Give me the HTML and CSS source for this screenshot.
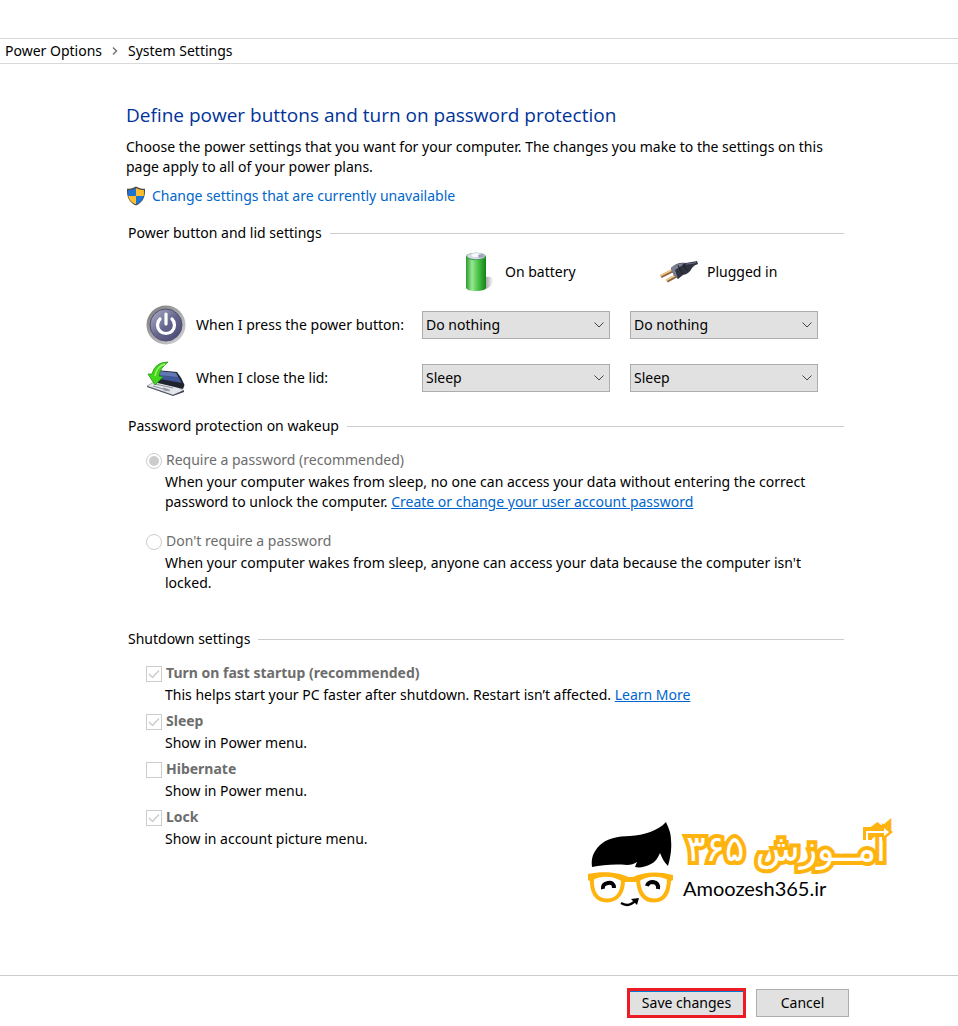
FILE: index.html
```html
<!DOCTYPE html>
<html lang="en">

<head>
    <meta charset="utf-8" />
    <meta name="viewport" content="width=device-width, initial-scale=1.0" />
    <title>System Settings</title>
    <link rel="stylesheet" href="styles.css">
</head>

<body>
    <nav class="breadcrumb" aria-label="Breadcrumb">
        <a href="#">Power Options</a>
        <svg class="breadcrumb-arrow" viewBox="0 0 8 10" aria-hidden="true">
            <path d="M2 1.5 L5.5 5 L2 8.5" />
        </svg>
        <a href="#">System Settings</a>
    </nav>

    <main class="content">
        <h1>Define power buttons and turn on password protection</h1>
        <p class="intro">Choose the power settings that you want for your computer. The changes you make to the settings on this page apply to all of your power plans.</p>
        <a class="admin-link" href="#">
            <svg class="shield" viewBox="0 0 20 20" aria-hidden="true">
                <path d="M10 0.5 C13 2.4 16 2.9 19 2.8 C19.3 10.5 17.5 16.3 10 19.5 C2.5 16.3 0.7 10.5 1 2.8 C4 2.9 7 2.4 10 0.5 Z" fill="#4a4a4a" />
                <path d="M10 2 V10 H2.2 C2 8 2 6 2.2 4 C5 4 7.5 3.5 10 2 Z M10 10 H17.8 C17 14 14.5 16.7 10 18.3 Z" fill="#1e74d2" />
                <path d="M10 2 C12.5 3.5 15 4 17.8 4 C18 6 18 8 17.8 10 H10 Z M2.2 10 H10 V18.3 C5.5 16.7 3 14 2.2 10 Z" fill="#fdbf2d" />
            </svg>
            <span>Change settings that are currently unavailable</span>
        </a>

        <section>
            <h2>Power button and lid settings</h2>
            <div class="power-grid">
                <div class="column-head on-battery">
                    <svg class="icon" viewBox="0 0 40 40" aria-hidden="true">
                        <defs>
                            <linearGradient id="battery-green">
                                <stop offset="0" stop-color="#2a9a2a" />
                                <stop offset="0.3" stop-color="#98e894" />
                                <stop offset="0.6" stop-color="#4cc348" />
                                <stop offset="1" stop-color="#128316" />
                            </linearGradient>
                            <linearGradient id="battery-shadow">
                                <stop offset="0" stop-color="#888" />
                                <stop offset="1" stop-color="#fff" />
                            </linearGradient>
                        </defs>
                        <path d="M26 25 Q36 24 34 30 Q32 36 24 38 Z" fill="url(#battery-shadow)" />
                        <path d="M7 4 V36 Q8 39 17 39 Q26 39 27 36 V4 Z" fill="url(#battery-green)" />
                        <ellipse cx="17" cy="4.5" rx="10" ry="3.8" fill="#3f9d48" />
                        <ellipse cx="17" cy="4" rx="9" ry="3.2" fill="#d5d8e6" />
                        <path d="M12 3 Q17 0 20 2 L19 5 H14 Z" fill="#f8f8ff" />
                        <path d="M19 3 L24 2 L25 5 L20 6 Z" fill="#9ea2bd" />
                    </svg>
                    <span>On battery</span>
                </div>
                <div class="column-head plugged-in">
                    <svg class="icon" viewBox="0 0 40 40" aria-hidden="true">
                        <path d="M2 24.5 L15 18 M8 29 L18 23.5" stroke="#8c6239" stroke-width="3.2" />
                        <path d="M1 24 L14 17.5 M7 28.5 L17 23" stroke="#f0c78c" stroke-width="1.6" />
                        <path d="M12 16 Q18 10 27 11 Q33 10 38 9 L39 12 Q35 13 33 16 Q30 22 24 23 L19 27 Q14 24 12 16 Z" fill="#30333f" />
                        <path d="M12 16 Q18 10.5 26 11.5 Q22 14 16 18 L19 27 Q14 24 12 16 Z" fill="#7b8090" />
                        <path d="M19 13 Q21 19 24 22 M24 12 Q26 17 29 19" fill="none" stroke="#1d202a" />
                        <path d="M27 12 Q32 12 37 10.5" fill="none" stroke="#69708a" />
                    </svg>
                    <span>Plugged in</span>
                </div>

                <div class="row-label">
                    <svg class="icon" viewBox="0 0 40 40" aria-hidden="true">
                        <defs>
                            <linearGradient id="power-rim" x1="0" y1="0" x2="1" y2="1">
                                <stop offset="0" stop-color="#777" />
                                <stop offset="1" stop-color="#d8d8dc" />
                            </linearGradient>
                            <linearGradient id="power-face" x1="0" y1="0" x2="1" y2="1">
                                <stop offset="0" stop-color="#b5b6ce" />
                                <stop offset="0.5" stop-color="#66678f" />
                                <stop offset="1" stop-color="#454570" />
                            </linearGradient>
                        </defs>
                        <circle cx="20" cy="20" r="19.5" fill="url(#power-rim)" />
                        <circle cx="20" cy="20" r="16" fill="url(#power-face)" stroke="#50506c" />
                        <path d="M14 14 A8.5 8.5 0 1 0 26 14 M20 9 V19" fill="none" stroke="#fff" stroke-width="3.2" stroke-linecap="round" />
                    </svg>
                    <span id="press-label">When I press the power button:</span>
                </div>
                <select aria-labelledby="press-label">
                    <option>Do nothing</option>
                    <option>Sleep</option>
                    <option>Shut down</option>
                </select>
                <select aria-labelledby="press-label">
                    <option>Do nothing</option>
                    <option>Sleep</option>
                    <option>Shut down</option>
                </select>

                <div class="row-label">
                    <svg class="icon" viewBox="0 0 40 40" aria-hidden="true">
                        <path d="M1 28 L8 24 L30 28 L38 33 L27 37 Z" fill="#e4e6eb" stroke="#9a9da6" stroke-width="0.8" />
                        <path d="M27 37 L38 32 V34 L27 38 L1 29 V28 Z" fill="#444855" />
                        <path d="M9 26 L27 30 M7 28 L24 33 M17 30 L22 31.5 L18 33" stroke="#9296a0" stroke-width="1.2" fill="none" />
                        <path d="M10 12 L31 14 Q36 20 38.5 27 L37 31 L12 25 Z" fill="#20242f" />
                        <path d="M12 13 L30 15 L36 25 L14 21 Z" fill="#3f5797" />
                        <path d="M12 13 L30 15 L32 19 L13 17 Z" fill="#6178b2" />
                        <path d="M22 4 Q9 4 6 16 L2 16 L9 27 L17 19 L13 18 Q14 10 22 4 Z" fill="#43d51b" stroke="#1f9610" stroke-width="0.8" />
                        <path d="M19 6 Q11 8 9 18" fill="none" stroke="#9bf26d" stroke-width="1.5" />
                    </svg>
                    <span id="lid-label">When I close the lid:</span>
                </div>
                <select aria-labelledby="lid-label">
                    <option>Sleep</option>
                    <option>Do nothing</option>
                    <option>Shut down</option>
                </select>
                <select aria-labelledby="lid-label">
                    <option>Sleep</option>
                    <option>Do nothing</option>
                    <option>Shut down</option>
                </select>
            </div>
        </section>

        <section class="password">
            <h2>Password protection on wakeup</h2>
            <div class="choice">
                <input type="radio" name="password" id="require" checked disabled />
                <label for="require">Require a password (recommended)</label>
                <p>When your computer wakes from sleep, no one can access your data without entering the correct password to unlock the computer. <a href="#">Create or change your user account password</a></p>
            </div>
            <div class="choice">
                <input type="radio" name="password" id="no-require" disabled />
                <label for="no-require">Don't require a password</label>
                <p>When your computer wakes from sleep, anyone can access your data because the computer isn't locked.</p>
            </div>
        </section>

        <section class="shutdown">
            <h2>Shutdown settings</h2>
            <div class="choice">
                <input type="checkbox" id="fast-startup" checked disabled />
                <label for="fast-startup">Turn on fast startup (recommended)</label>
                <p>This helps start your PC faster after shutdown. Restart isn’t affected. <a href="#">Learn More</a></p>
            </div>
            <div class="choice">
                <input type="checkbox" id="sleep" checked disabled />
                <label for="sleep">Sleep</label>
                <p>Show in Power menu.</p>
            </div>
            <div class="choice">
                <input type="checkbox" id="hibernate" disabled />
                <label for="hibernate">Hibernate</label>
                <p>Show in Power menu.</p>
            </div>
            <div class="choice">
                <input type="checkbox" id="lock" checked disabled />
                <label for="lock">Lock</label>
                <p>Show in account picture menu.</p>
            </div>
        </section>
    </main>

    <!-- watermark laid over the page -->
    <div class="brand">
        <svg class="brand-face" viewBox="0 0 88 86" aria-hidden="true">
            <path d="M4 45 C3 36 5 30 12 23 C18 17 30 14 42 14 C56 13 70 9 78 0 C80 5 83 10 83 18 C84 28 82 37 80 44 C76 40 74 36 72 31 C70 36 67 40 63 42 C57 45 52 46 47 45 L49 40 C46 42 43 43 39 43 C26 42 14 43 4 45 Z" />
            <path d="M0 52 C14 49 30 50 40 55 H45 C55 50 70 49 85 53 V58 L80 61 V58 C70 53 58 54 50 60 H35 C26 54 14 53 5 58 V61 L0 58 Z" fill="#ffb30f" />
            <path d="M4 56 C3 71 9 78.5 19 78.5 C29 78.5 35 71 35 58 M50 58 C51 71 56 78.5 66 78.5 C76 78.5 81 71 81 56" fill="none" stroke="#ffb30f" stroke-width="4" />
            <path d="M15 67 Q14 62 20 61 Q26 60 26 66 M59 64 Q60 60 65 60 Q71 61 70 67" fill="none" stroke="#000" stroke-width="4" />
            <path d="M33 81 Q41 86 48 78" fill="none" stroke="#000" stroke-width="2.5" />
            <path d="M43 77 L51 76 L49 83 Z" />
        </svg>
        <div class="brand-text">
            <div class="brand-fa" lang="fa" dir="rtl">آمــوزش ۳۶۵</div>
            <svg class="brand-arrow" viewBox="0 0 32 20" aria-hidden="true">
                <path d="M1 18 V5 H20 V1 L31 10 L20 19 V15 H10 V18 Z" fill="#ffb30f" />
                <path d="M5 18 V10 H25" fill="none" stroke="#fff" stroke-width="2" />
                <path d="M22 6 L27 10 L22 14 Z" fill="#fff" />
            </svg>
            <div class="brand-en">Amoozesh365.ir</div>
        </div>
    </div>

    <footer class="actions">
        <button type="button" class="save">Save changes</button>
        <button type="button">Cancel</button>
    </footer>
</body>

</html>
```

FILE: styles.css
```css
* {
    box-sizing: border-box;
}

body {
    margin: 0;
    min-height: 100vh;
    display: flex;
    flex-direction: column;
    position: relative;
    background: #fff;
    color: #000;
    font-family: "Noto Sans", "Open Sans", sans-serif;
    font-size: 14px;
    line-height: 20px;
}

h1,
h2,
p {
    margin: 0;
    font-weight: normal;
}

a {
    color: #0066cc;
}

.breadcrumb {
    display: flex;
    align-items: center;
    gap: 9px;
    height: 26px;
    margin-top: 38px;
    padding: 0 5px;
    border-top: 1px solid #d9d9d9;
    border-bottom: 1px solid #d9d9d9;
}

.breadcrumb a {
    color: #000;
    text-decoration: none;
}

.breadcrumb-arrow {
    width: 8px;
    height: 10px;
    fill: none;
    stroke: #777;
    stroke-width: 1.5;
}

.content {
    flex: 1;
    padding: 37px 114px 24px 126px;
}

h1 {
    color: #003399;
    font-family: "Open Sans", sans-serif;
    font-size: 19px;
    line-height: 28px;
}

.intro {
    margin-top: 8px;
    max-width: 710px;
}

.admin-link {
    display: flex;
    align-items: center;
    gap: 6px;
    width: fit-content;
    margin-top: 9px;
    text-decoration: none;
}

.shield {
    width: 20px;
    height: 20px;
}

h2 {
    display: flex;
    align-items: center;
    gap: 8px;
    padding-left: 2px;
    font-size: 14px;
    line-height: 20px;
}

h2::after {
    content: "";
    flex: 1;
    border-top: 1px solid #ccc;
}

section {
    margin-top: 17px;
}

.power-grid {
    display: grid;
    grid-template-columns: 256px 188px 188px;
    column-gap: 20px;
    align-items: center;
    padding-left: 20px;
}

.power-grid select {
    appearance: none;
    height: 28px;
    padding: 0 24px 0 3px;
    border: 1px solid #adadad;
    border-radius: 0;
    background: #e1e1e1 url("data:image/svg+xml,%3Csvg xmlns='http://www.w3.org/2000/svg' width='10' height='6'%3E%3Cpath d='M.5.5 5 5 9.5.5' fill='none' stroke='%23444'/%3E%3C/svg%3E") no-repeat right 5px center;
    color: #000;
    font: inherit;
}

.column-head,
.row-label {
    display: flex;
    align-items: center;
    gap: 10px;
    white-space: nowrap;
}

.column-head {
    height: 55px;
    padding-top: 2px;
}

.on-battery {
    grid-column: 2;
    gap: 6px;
    padding-left: 37px;
}

.plugged-in {
    gap: 8px;
    padding-left: 29px;
}

.row-label {
    height: 53px;
}

.icon {
    width: 40px;
    height: 40px;
    flex: none;
}

.choice {
    display: grid;
    grid-template-columns: 16px 1fr;
    column-gap: 4px;
    align-items: center;
    padding-left: 20px;
}

.choice label {
    color: #6d6d6d;
}

.choice p {
    grid-column: 1 / 3;
    margin-top: 2px;
    padding-left: 19px;
}

.choice input {
    appearance: none;
    display: grid;
    place-content: center;
    width: 16px;
    height: 16px;
    margin: 2px 0 0;
    border: 1px solid #ccc;
    background: #fff;
}

.choice input[type="radio"] {
    border-radius: 50%;
}

.choice input[type="radio"]:checked::before {
    content: "";
    width: 10px;
    height: 10px;
    border-radius: 50%;
    background: #ccc;
}

.choice input[type="checkbox"]:checked {
    background: url("data:image/svg+xml,%3Csvg xmlns='http://www.w3.org/2000/svg' width='14' height='14'%3E%3Cpath d='M2 7 5.5 10.5 12 3.5' fill='none' stroke='%23ccc' stroke-width='1.5'/%3E%3C/svg%3E") no-repeat center;
}

.password {
    margin-top: 12px;
}

.password .choice {
    margin-top: 14px;
    margin-bottom: 19px;
    padding-right: 20px;
}

.password .choice + .choice {
    margin-top: 19px;
}

.shutdown {
    margin-top: 36px;
}

.shutdown h2 {
    margin-bottom: 14px;
}

.shutdown .choice {
    margin-bottom: 6px;
}

.shutdown label {
    font-weight: bold;
}

.brand {
    position: absolute;
    right: 66px;
    bottom: 118px;
    display: flex;
    gap: 7px;
}

.brand-face {
    width: 88px;
    height: 86px;
}

.brand-text {
    position: relative;
    width: 209px;
}

.brand-fa {
    padding-right: 6px;
    color: #fff;
    font: 36px/54px "DejaVu Sans", sans-serif;
    white-space: nowrap;
    -webkit-text-stroke: 8px #ffb30f;
    paint-order: stroke fill;
}

.brand-arrow {
    position: absolute;
    top: 0;
    right: -2px;
    width: 32px;
    height: 20px;
}

.brand-en {
    font: 20px/24px Lato, sans-serif;
}

.actions {
    display: flex;
    justify-content: flex-end;
    align-items: center;
    gap: 10px;
    padding: 12px 109px 8px;
    border-top: 1px solid #ccc;
}

.actions button {
    min-width: 93px;
    height: 28px;
    padding: 0 12px;
    border: 1px solid #adadad;
    background: #e1e1e1;
    color: #000;
    font: inherit;
}

.actions .save {
    min-width: 119px;
    height: 30px;
    padding: 0;
    border: 3px solid #ed1c24;
    box-shadow: inset 0 1px #0078d7;
}
```
